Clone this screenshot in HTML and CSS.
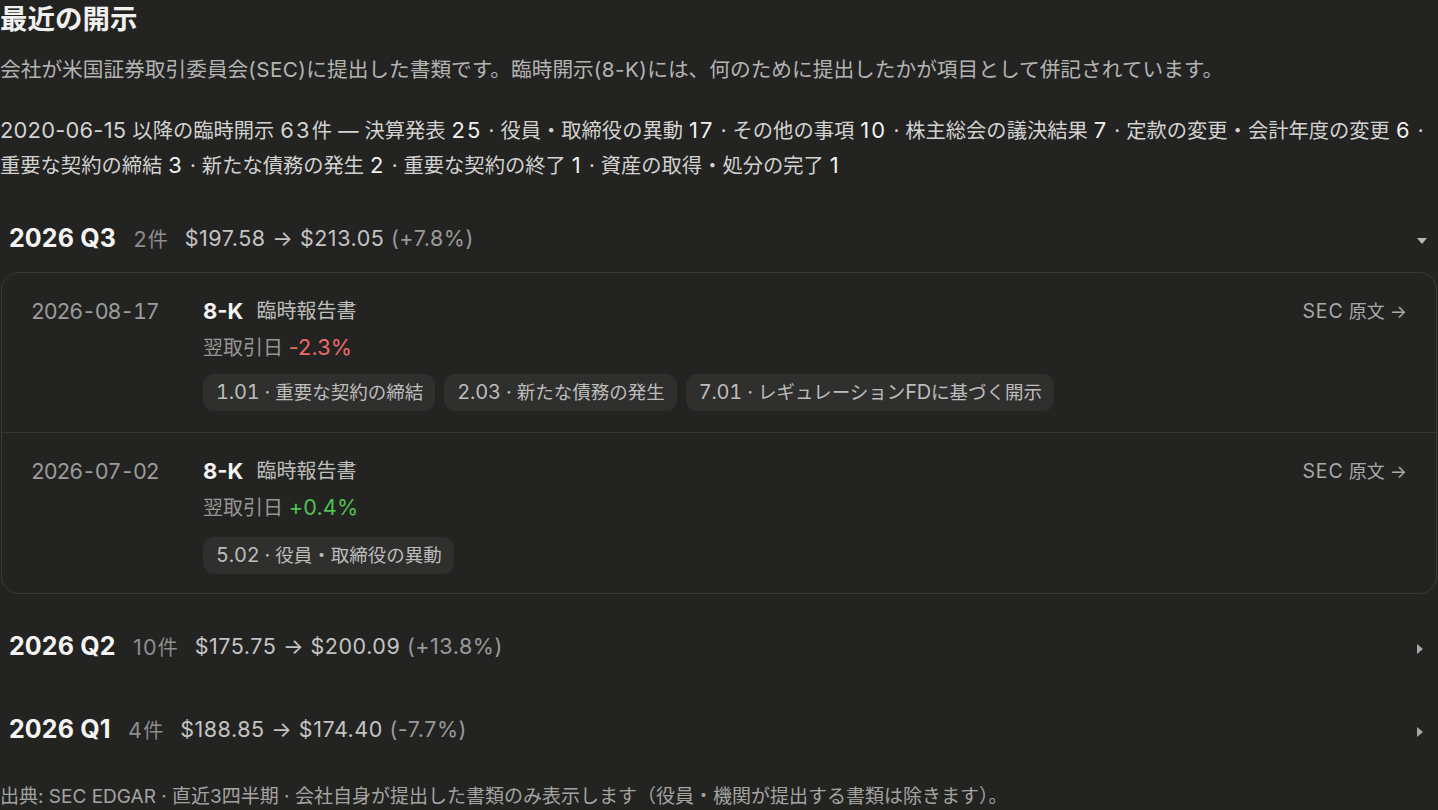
FILE: index.html
```html
<!DOCTYPE html>
<html lang="ja">
<head>
<meta charset="utf-8">
<title>最近の開示</title>
<link rel="stylesheet" href="styles.css">
</head>
<body>
<main class="page">
  <h1 class="title">最近の開示</h1>
  <p class="desc">会社が米国証券取引委員会<span class="n">(SEC)</span>に提出した書類です。臨時開示<span class="n">(8-K)</span>には、何のために提出したかが項目として併記されています。</p>
  <p class="summary"><span class="n nd">2020-06-15</span> 以降の臨時開示 <span class="n">63</span>件 — 決算発表 <b class="n">25</b> · 役員・取締役の異動 <b class="n">17</b> · その他の事項 <b class="n">10</b> · 株主総会の議決結果 <b class="n">7</b> · 定款の変更・会計年度の変更 <b class="n">6</b> ·<br>重要な契約の締結 <b class="n">3</b> · 新たな債務の発生 <b class="n">2</b> · 重要な契約の終了 <b class="n">1</b> · 資産の取得・処分の完了 <b class="n">1</b></p>

  <section class="quarter">
    <div class="q-head">
      <span class="q-name">2026 Q3</span>
      <span class="q-count"><span class="n">2</span>件</span>
      <span class="q-price">$197.58 → $213.05 <span class="q-pct">(+7.8%)</span></span>
      <span class="caret caret-down"></span>
    </div>
    <div class="card">
      <div class="filing">
        <div class="f-date">2026-08-17</div>
        <div class="f-body">
          <div class="f-line1"><span class="f-type">8-K</span><span class="f-kind">臨時報告書</span></div>
          <div class="f-line2">翌取引日 <span class="n neg">-2.3%</span></div>
          <div class="tags">
            <span class="tag"><span class="n">1.01 ·</span>&nbsp;重要な契約の締結</span>
            <span class="tag"><span class="n">2.03 ·</span>&nbsp;新たな債務の発生</span>
            <span class="tag"><span class="n">7.01 ·</span>&nbsp;レギュレーション<span class="n">FD</span>に基づく開示</span>
          </div>
        </div>
        <a class="f-link"><span class="n">SEC</span> 原文 →</a>
      </div>
      <div class="filing">
        <div class="f-date">2026-07-02</div>
        <div class="f-body">
          <div class="f-line1"><span class="f-type">8-K</span><span class="f-kind">臨時報告書</span></div>
          <div class="f-line2">翌取引日 <span class="n pos">+0.4%</span></div>
          <div class="tags">
            <span class="tag"><span class="n">5.02 ·</span>&nbsp;役員・取締役の異動</span>
          </div>
        </div>
        <a class="f-link"><span class="n">SEC</span> 原文 →</a>
      </div>
    </div>
  </section>

  <section class="quarter">
    <div class="q-head">
      <span class="q-name">2026 Q2</span>
      <span class="q-count"><span class="n">10</span>件</span>
      <span class="q-price">$175.75 → $200.09 <span class="q-pct">(+13.8%)</span></span>
      <span class="caret caret-right"></span>
    </div>
  </section>

  <section class="quarter">
    <div class="q-head">
      <span class="q-name">2026 Q1</span>
      <span class="q-count"><span class="n">4</span>件</span>
      <span class="q-price">$188.85 → $174.40 <span class="q-pct">(-7.7%)</span></span>
      <span class="caret caret-right"></span>
    </div>
  </section>

  <p class="footer">出典: SEC EDGAR · 直近3四半期 · 会社自身が提出した書類のみ表示します（役員・機関が提出する書類は除きます）。</p>
</main>
</body>
</html>
```

FILE: styles.css
```css
html, body {
  margin: 0;
  padding: 0;
  background: #232322;
}
body {
  font-family: Inter, "Noto Sans CJK JP", sans-serif;
  color: #e6e6e4;
}
.page {
  width: 1438px;
  height: 810px;
  overflow: hidden;
}
.n {
  font-size: 1.08em;
  letter-spacing: 0.05em;
}
.title {
  margin: 0;
  font-size: 27.5px;
  line-height: 38px;
  font-weight: 700;
  color: #f0f0ee;
}
.desc {
  margin: 17px 0 0;
  font-size: 20.7px;
  line-height: 30px;
  color: #b4b4b2;
}
.desc .n {
  font-size: 1em;
  letter-spacing: 0.02em;
}
.summary {
  margin: 28px 0 0;
  font-size: 20.3px;
  line-height: 35px;
  color: #d2d2d0;
  white-space: nowrap;
  word-spacing: 0.3px;
}
.summary .n {
  letter-spacing: 0.1em;
}
.summary .nd {
  letter-spacing: 0.01em;
}
.summary b {
  font-weight: 400;
  color: #f2f2f0;
}
.quarter {
  margin-top: 24px;
}
.quarter + .quarter {
  margin-top: 21px;
}
.q-head {
  height: 62px;
  display: flex;
  align-items: center;
  padding: 0 11px 0 9px;
}
.q-name {
  font-size: 25px;
  font-weight: 700;
  letter-spacing: 0.005em;
  color: #f4f4f2;
  margin-right: 17.5px;
}
.q-count {
  font-size: 20px;
  color: #8e8e8c;
  margin-right: 17px;
}
.q-price {
  font-size: 21.5px;
  letter-spacing: 0.025em;
  color: #c4c4c2;
  flex: 1;
}
.q-pct {
  color: #9a9a98;
}
.caret {
  width: 0;
  height: 0;
}
.caret-down {
  border-left: 5px solid transparent;
  border-right: 5px solid transparent;
  border-top: 6px solid #b8b8b6;
  margin-top: 6px;
}
.caret-right {
  border-top: 5px solid transparent;
  border-bottom: 5px solid transparent;
  border-left: 6px solid #a8a8a6;
  margin-top: 6px;
  margin-right: 4px;
}
.card {
  margin: 3px 1px 0 1px;
  border: 1.5px solid #3a3a39;
  border-radius: 18px;
}
.filing {
  display: flex;
  align-items: flex-start;
  padding: 23px 29px 21px 29px;
}
.filing + .filing {
  border-top: 1.5px solid #363635;
}
.filing:last-child {
  padding-bottom: 19px;
}
.f-date {
  width: 172px;
  flex: none;
  font-size: 21.5px;
  font-variant-numeric: tabular-nums;
  letter-spacing: -0.055em;
  line-height: 30px;
  height: 30px;
  color: #9c9c9a;
}
.f-body {
  flex: 1;
}
.f-line1 {
  display: flex;
  align-items: center;
  height: 30px;
  line-height: 30px;
}
.f-type {
  font-size: 22px;
  font-weight: 700;
  color: #f4f4f2;
  margin-right: 13px;
}
.f-kind {
  font-size: 20px;
  color: #bdbdbb;
}
.f-line2 {
  margin-top: 6px;
  font-size: 20px;
  line-height: 30px;
  height: 30px;
  color: #969694;
}
.f-line2 .n {
  letter-spacing: 0.01em;
}
.neg {
  color: #ec6a68;
}
.pos {
  color: #4ec14e;
}
.tags {
  margin-top: 12px;
  display: flex;
  flex-wrap: wrap;
  gap: 9px;
}
.filing:last-child .tags {
  margin-top: 15px;
}
.tag {
  height: 37px;
  display: inline-flex;
  align-items: center;
  padding: 0 12px 0 13px;
  background: #2f2f2e;
  border-radius: 11px;
  font-size: 18.5px;
  line-height: 37px;
  color: #bdbdbb;
  white-space: nowrap;
}
.tag .n {
  font-variant-numeric: tabular-nums;
  letter-spacing: -0.01em;
}
.f-link {
  font-size: 18px;
  line-height: 30px;
  height: 30px;
  color: #a9a9a7;
}
.footer {
  margin: 24px 0 0;
  font-size: 19px;
  line-height: 26px;
  color: #a3a3a1;
  white-space: nowrap;
}
```
